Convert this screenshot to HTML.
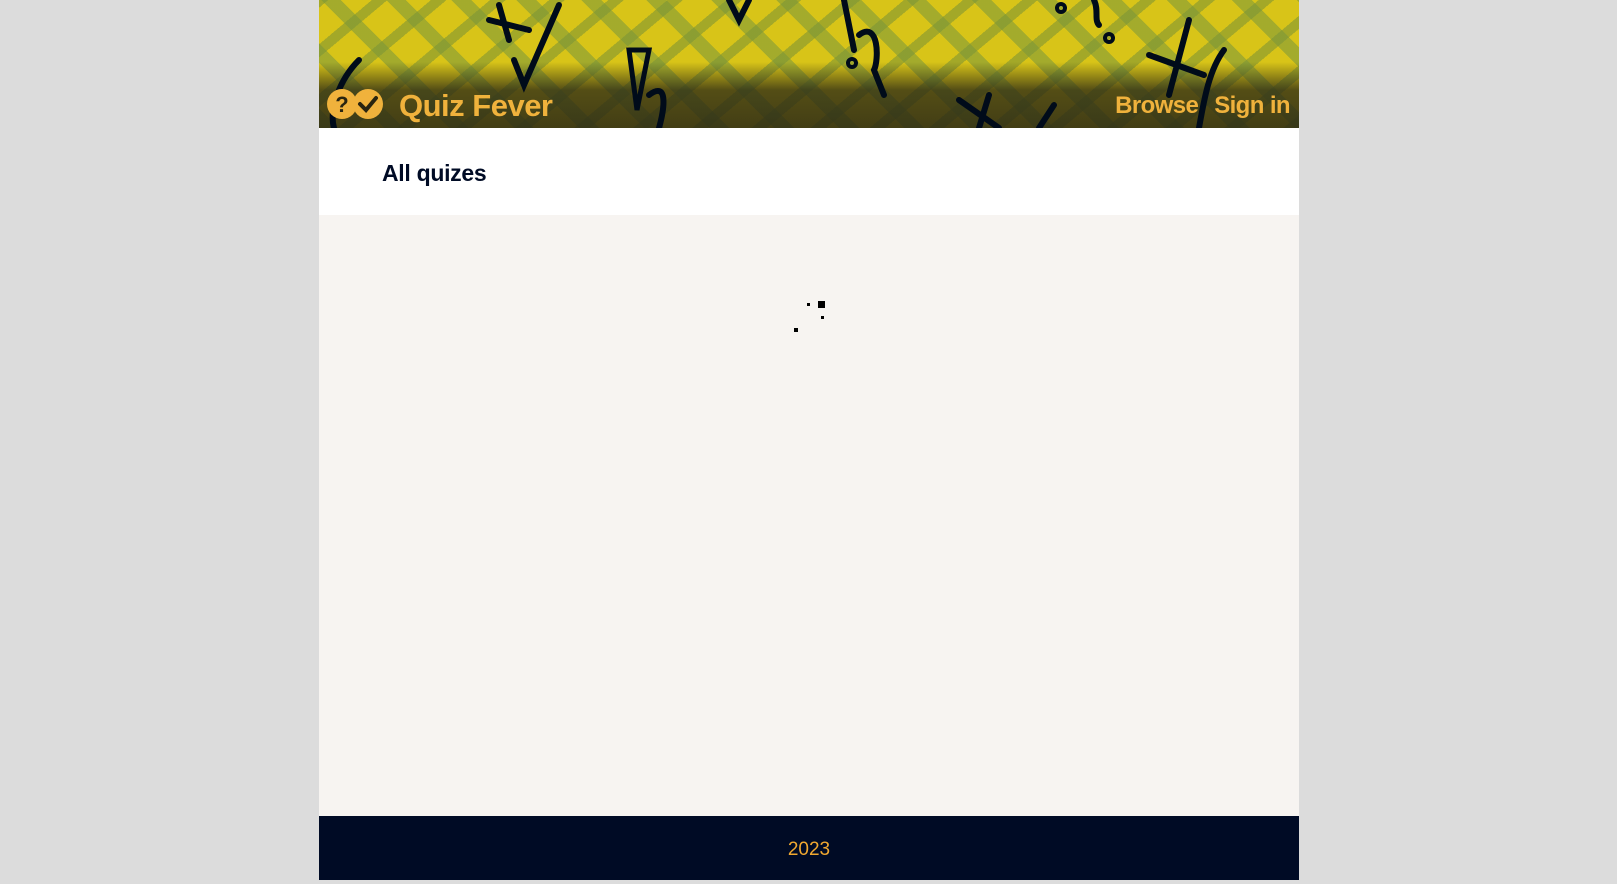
<!DOCTYPE html>
<html><head><meta charset="utf-8"><style>
html,body{margin:0;padding:0}
body{width:1617px;height:880px;background:#dcdcdc;font-family:"Liberation Sans",sans-serif;position:relative;overflow:hidden}
.wrap{position:absolute;left:319px;width:980px;top:0;height:880px;background:#f7f4f1}
.hdr{position:absolute;left:0;top:0;width:980px;height:128px;overflow:hidden;
background:
linear-gradient(to bottom,rgba(0,0,0,0) 0,rgba(0,0,0,0) 62px,rgba(40,38,20,.75) 90px,rgba(40,38,20,.85) 128px),
repeating-linear-gradient(45deg,rgba(120,150,60,.55) 0 14px,rgba(0,0,0,0) 14px 46px),
repeating-linear-gradient(-40deg,rgba(110,140,55,.5) 0 10px,rgba(0,0,0,0) 10px 38px),
#d8c418;}
.hdr svg.bg{position:absolute;left:0;top:0}
.hdr svg.logo{position:absolute;left:8px;top:88px}
.title{position:absolute;left:80px;top:88px;font-size:31px;font-weight:bold;color:#f0b23c;letter-spacing:-0.5px}
.nav{position:absolute;right:9px;top:92px;font-size:24px;font-weight:bold;color:#f0b23c;letter-spacing:-0.6px}
.nav span{margin-left:16px}
.band{position:absolute;left:0;top:128px;width:980px;height:87px;background:#fff}
.band h1{margin:0;position:absolute;left:63px;top:32px;font-size:23px;color:#000b25;letter-spacing:-0.3px}
.ft{position:absolute;left:0;top:816px;width:980px;height:64px;background:#000b25;color:#f0a830;font-size:19px;text-align:center;line-height:68px}
.d{position:absolute;background:#000}
</style></head><body>
<div class="wrap">
<div class="hdr">
<svg class="bg" width="980" height="128" fill="none" stroke="#000b1a" stroke-width="6" stroke-linecap="round">
<path d="M180 5 L190 40 M170 20 L210 30"/>
<path d="M195 60 L205 85 L240 5"/>
<path d="M40 60 C20 80 10 110 15 128"/>
<path d="M310 50 L330 50 L318 110 Z" stroke-width="5"/>
<path d="M330 95 C350 80 345 110 340 128"/>
<path d="M410 0 L420 20 L430 0"/>
<path d="M525 0 L535 50 M540 35 C560 20 560 60 555 70 L565 95"/>
<circle cx="533" cy="63" r="4" stroke-width="4"/>
<path d="M640 100 L680 128 M670 95 L660 128"/>
<path d="M720 128 L735 105"/>
<circle cx="742" cy="8" r="4" stroke-width="4"/>
<path d="M775 0 C780 10 775 20 780 25"/><circle cx="790" cy="38" r="4" stroke-width="4"/>
<path d="M870 20 L850 95 M830 55 L885 75"/>
<path d="M905 50 C890 70 885 100 880 128"/>
</svg>
<svg class="logo" width="56" height="32" viewBox="0 0 56 32">
<circle cx="15" cy="16" r="15" fill="#f0b23c"/><circle cx="41" cy="16" r="15" fill="#f0b23c"/>
<text x="15" y="24" font-size="22" font-weight="bold" text-anchor="middle" fill="#2a2510" font-family="Liberation Sans">?</text>
<path d="M33 16 L39 22 L49 10" stroke="#2a2510" stroke-width="4" fill="none" stroke-linecap="round"/>
</svg>
<div class="title">Quiz Fever</div>
<div class="nav"><span>Browse</span><span>Sign in</span></div>
</div>
<div class="band"><h1>All quizes</h1></div>
<div class="d" style="left:499px;top:301px;width:7px;height:7px"></div>
<div class="d" style="left:488px;top:303px;width:3px;height:3px"></div>
<div class="d" style="left:502px;top:316px;width:3px;height:3px"></div>
<div class="d" style="left:475px;top:328px;width:4px;height:4px"></div>
<div class="ft">2023</div>
</div>
</body></html>
